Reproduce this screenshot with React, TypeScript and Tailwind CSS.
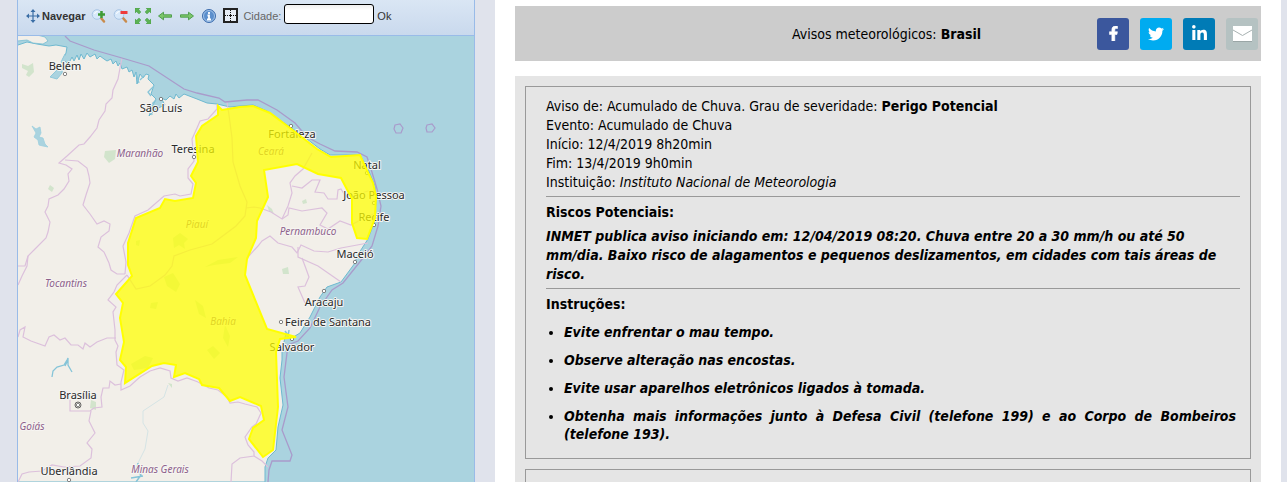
import React, { useState } from "react";
import { FaFacebookF, FaLinkedinIn, FaTwitter } from "react-icons/fa";

const cities = [
  { name: "Belém", x: 65, y: 70, dot: [65, 74] },
  { name: "São Luís", x: 161, y: 112, dot: [161, 99] },
  { name: "Teresina", x: 193, y: 153, dot: [194, 157] },
  { name: "Fortaleza", x: 292, y: 138, dot: [291, 126] },
  { name: "Natal", x: 367, y: 169, dot: [367, 173] },
  { name: "João Pessoa", x: 374, y: 199, dot: [374, 203] },
  { name: "Recife", x: 374, y: 221, dot: [374, 225] },
  { name: "Maceió", x: 355, y: 258, dot: [355, 262] },
  { name: "Aracaju", x: 324, y: 306, dot: [324, 291] },
  { name: "Feira de Santana", x: 328, y: 326, dot: [281, 322] },
  { name: "Salvador", x: 292, y: 351, dot: [292, 339] },
  { name: "Brasília", x: 78, y: 399, dot: [78, 405] },
  { name: "Uberlândia", x: 69, y: 475, dot: [69, 480] },
];

const states = [
  { name: "Maranhão", x: 140, y: 157 },
  { name: "Piauí", x: 197, y: 228 },
  { name: "Ceará", x: 271, y: 155 },
  { name: "Pernambuco", x: 308, y: 235 },
  { name: "Tocantins", x: 66, y: 287 },
  { name: "Bahia", x: 223, y: 325 },
  { name: "Goiás", x: 32, y: 430 },
  { name: "Minas Gerais", x: 160, y: 473 },
];

const borders = [
  "122,58 120,68 118,79 113,90 112,98 106,104 105,111 99,120 97,128 90,137 84,144 79,145 67,156 59,163 66,165 72,169 68,174 69,181 64,189 58,195 49,199 48,206 45,212 50,222 48,232 46,238 36,248 28,256 27,266 22,276 18,285",
  "65,160 78,161 87,168 89,176 90,183 86,195 83,205 90,214 97,224 104,221 110,224 109,231 101,237 98,247 104,252 109,263 111,270 117,274 125,274",
  "125,274 126,262 123,246 129,233 135,216 148,210 164,196 175,194 180,196 191,194 193,184 188,178 188,169 194,161 192,139 197,128 200,121 208,119 217,109 217,104",
  "127,275 117,285 114,292 108,300 116,307 113,312 115,330 115,340 118,346 116,352 117,365 124,370 121,382 121,390 130,386 140,377 150,371 160,368 170,371 171,378 178,381 187,378 198,382 209,388 218,390 227,397 230,403 238,402 245,404 257,407 261,413 256,424 252,427 245,437 248,445 254,452 254,456 240,458 232,464 231,482",
  "254,456 262,461 268,467",
  "18,337 20,330 25,327 23,337 31,341 45,346 49,337 54,335 60,340 65,338 71,345 78,345 83,349 85,343 90,347 97,342 107,338 116,338",
  "70,400 70,411 90,411 94,408 102,407 101,397 103,388 109,388 110,381 115,385 121,384",
  "91,411 89,421 95,433 87,443 92,449 91,458 80,466 64,467 52,465 42,471 29,472 22,474 18,482",
  "18,266 25,266 28,256",
  "312,153 303,169 295,176 290,183 292,193 288,206 282,219 271,212 260,208",
  "292,186 302,188 312,180 320,180 315,192 324,193 328,199 337,199 338,190 341,189 344,194 352,196 368,191 375,190",
  "282,219 288,215 289,208 302,211 322,208 327,213 320,225 328,229 340,221 351,225 364,218 374,214",
  "247,258 258,246 262,241 270,236 278,243 292,247 297,253 301,245 314,251 328,252 341,248 368,243",
  "298,247 298,257 318,266 341,282",
  "302,258 305,266 309,277 305,286 298,287 305,303",
  "227,102 229,115 232,138 233,162 240,186 247,202 245,216 236,226 220,238 212,244 190,250 174,256 172,266 165,275 150,286 136,289 127,275",
  "246,208 254,207 260,208",
];

const greens = [
  "22,64 28,66 33,63 34,72 29,77 26,75 28,71 22,68",
  "105,151 116,150 115,159 109,163 104,157",
  "91,400 96,402 96,410 90,408",
  "173,238 180,233 188,239 184,243 185,249 179,245 174,248",
  "131,364 145,356 153,358 148,368 134,370",
  "205,267 218,260 238,257 230,263 214,265",
  "164,277 173,273 180,284 176,292 167,286",
  "195,300 203,306 206,318 199,314",
  "225,325 230,336 228,347 223,338",
  "207,350 213,346 220,353 214,359",
  "151,303 158,302 156,309 150,308",
  "136,241 140,240 139,246 136,245",
  "282,269 288,267 289,274 283,274",
  "302,201 306,199 307,203 303,204",
  "267,205 272,209 274,214 269,211",
  "50,185 54,188 52,192 48,189",
  "168,383 172,384 172,388",
];

const coast =
  "18,45 27,42 37,44 49,46 56,45 67,47 66,53 63,59 67,63 66,66 70,61 72,57 74,61 77,55 79,60 81,54 84,59 87,53 90,57 95,54 97,59 100,56 104,59 107,61 111,59 113,64 116,61 118,66 120,63 122,69 127,67 129,72 132,70 134,77 136,72 137,84 140,74 143,78 146,74 149,75 148,79 154,85 151,94 156,99 153,105 149,116 156,109 165,105 161,98 166,100 170,96 174,99 176,94 179,98 184,94 197,99 207,103 217,104 230,107 240,106 253,105 267,111 290,127 307,139 320,149 330,155 360,155 368,169 375,186 376,203 374,223 368,239 357,256 355,263 341,282 327,287 320,297 310,317 300,333 290,339 286,333 284,342 282,349 282,360 280,378 283,405 278,427 276,450 268,458 265,467 265,482";

const sea =
  "65,36 70,41 94,50 122,58 149,66 184,89 197,93 219,98 225,102 247,100 258,100 277,110 295,123 307,137 320,144 335,151 357,152 367,157 371,169 377,189 381,206 378,226 372,246 363,258 343,283 332,290 320,307 310,328 298,341 288,345 284,377 288,407 282,430 292,455 290,461 272,461 269,470 268,482";

const warningArea =
  "218,106 222,110 240,107 253,106 270,113 290,128 317,149 331,157 360,155 364,164 373,183 376,196 375,218 367,239 357,238 352,223 352,199 341,178 318,174 297,164 264,170 268,197 257,221 256,238 247,259 245,275 267,329 296,337 280,339 276,352 278,407 273,450 263,457 249,439 253,428 264,420 261,406 240,397 230,401 219,388 202,385 199,379 185,373 174,377 176,365 164,363 152,366 125,383 126,367 120,360 124,342 120,318 123,303 116,294 132,276 128,265 128,243 136,218 160,208 165,199 175,201 193,198 196,183 191,176 198,162 196,136 202,126 218,115";

const WarningMap = () => (
  <svg viewBox="18 36 456 446" className="block w-full bg-[#aad3df]" role="img" aria-label="Mapa de avisos">
    <polygon points={`${coast} 0,482 0,45`} fill="#f2efe9" stroke="#6fb9d0" strokeWidth="1" />
    <path d="M17 35h20l8 2 3 4-5 3-10-1-6-3-10 1z" fill="#f2efe9" stroke="#6fb9d0" strokeWidth=".7" />
    {/* rivers and reservoirs */}
    <path d="M65 54l-4 8 4 3M63 65l-6 5-7 7 7 2 5-6z" fill="#aad3df" stroke="#8fc8da" strokeWidth="1" />
    <path d="M32 126l4 3 4-2 1 6-2 4 4 1 2 6 3 3-5-1-4-1-1-5-4-3 2-4z" fill="#aad3df" stroke="#9dcfde" strokeWidth=".8" />
    <path d="M136 73l3 10M144 76l-4 4M154 86l-6 6 3 4M156 100l-6 6 2 9M52 377l1-6 4-4 7-2 3-5 1-2 0 7 4 7M68 360l-3 6" fill="none" stroke="#86c4d8" strokeWidth="1.3" />
    <path d="M168 385l-4 12-21 14 0 12 5 8-3 18-7 14-3 10" fill="none" stroke="#d5e4e5" strokeWidth="1" />
    <path d="M138 463l-1 7 4 5-5 7M131 478l12-2M285 331l3 4M289 330l-1 7" fill="none" stroke="#86c4d8" strokeWidth="1.5" />
    {greens.map((points) => (
      <polygon key={points} points={points} fill="#d2e4cc" />
    ))}
    {borders.map((points) => (
      <polyline key={points} points={points} fill="none" stroke="#dcc0dc" strokeWidth="1.2" />
    ))}
    <polyline points={sea} fill="none" stroke="#a99bcb" strokeWidth="1.3" />
    <path d="M395 125l5-1 3 4-2 5-5 0-2-4zM427 125l5-1 3 4-3 4-5 0-1-4z" fill="none" stroke="#a99bcb" strokeWidth="1.2" />
    {cities.map((c) => (
      <circle key={c.name} cx={c.dot[0]} cy={c.dot[1]} r="1.7" fill="#fff" stroke="#666" strokeWidth=".8" />
    ))}
    <circle cx="78" cy="405" r="3" fill="none" stroke="#444" strokeWidth=".8" />
    <g className="font-['Noto_Sans',sans-serif]" textAnchor="middle" paintOrder="stroke" strokeLinejoin="round">
      {states.map((s) => (
        <text key={s.name} x={s.x} y={s.y} fill="#8d618b" stroke="#f7f5f2" strokeWidth="2" className="text-[10px] italic">
          {s.name}
        </text>
      ))}
      {cities.map((c) => (
        <text key={c.name} x={c.x} y={c.y} fill="#2a2a2a" stroke="#f5f5f3" strokeWidth="2" className="text-[11px]">
          {c.name}
        </text>
      ))}
    </g>
    <polygon points={warningArea} fill="#ff0" fillOpacity=".73" stroke="#ff0" strokeWidth="2" />
  </svg>
);

const MoveIcon = () => (
  <svg viewBox="0 0 16 16" className="size-4">
    <path d="M8 3v10M3 8h10" stroke="#3a6ea5" strokeWidth="1.2" />
    <path d="M8 1l2.500 3h-5zM8 15l2.500-3h-5zM1 8l3-2.500v5zM15 8l-3-2.500v5z" fill="#3a6ea5" />
  </svg>
);

const ZoomIcon = ({ out = false }) => (
  <svg viewBox="0 0 16 16" className="size-4">
    <path d="M10 10l3 3.500" stroke="#c98b4c" strokeWidth="2.500" strokeLinecap="round" />
    <circle cx="6" cy="6.500" r="4.800" fill="#d6e8fa" stroke="#a9c5e4" />
    <path d="M3.500 6a3 3 0 0 1 3-2.500" stroke="#fff" fill="none" />
    {out ? (
      <path d="M7.500 4.500h7" stroke="#ee3b3b" strokeWidth="3" />
    ) : (
      <path d="M10.500 3v7M7 6.500h7" stroke="#3f9b35" strokeWidth="2.500" />
    )}
  </svg>
);

const ExtentIcon = () => (
  <svg viewBox="0 0 16 16" className="size-4" fill="#5cb254" stroke="#3f9440" strokeWidth=".4">
    <path d="M0 0h5L3.700 1.500 6 4 4 6 1.500 3.700 0 5zM16 0v5l-1.500-1.300L12 6l-2-2 2.300-2.500L11 0zM0 16v-5l1.500 1.300L4 10l2 2-2.300 2.500L5 16zM16 16h-5l1.300-1.500L10 12l2-2 2.500 2.300L16 11z" />
  </svg>
);

const ArrowIcon = ({ right = false }) => (
  <svg viewBox="0 0 16 16" className="size-4" fill="#7cc66b" stroke="#479a45" strokeWidth=".9">
    {right ? (
      <path d="M1.500 6.800h8V4.200L14.500 8l-5 3.800V9.200h-8z" />
    ) : (
      <path d="M14.500 6.800h-8V4.200L1.500 8l5 3.800V9.200h8z" />
    )}
  </svg>
);

const InfoIcon = () => (
  <svg viewBox="0 0 16 16" className="size-4">
    <circle cx="8" cy="8" r="6.500" fill="#5b8fcd" stroke="#3f6ead" />
    <circle cx="8" cy="8" r="5.500" fill="none" stroke="#b4cfee" strokeWidth=".8" />
    <path d="M8 4v2M6.500 7.500H8v4M6 11.500h4" stroke="#fff" strokeWidth="1.800" fill="none" />
  </svg>
);

const GridIcon = () => (
  <svg viewBox="0 0 16 16" className="size-4">
    <rect x="1" y="1" width="13" height="13" fill="#e6edf6" stroke="#222" strokeWidth="2" />
    <path d="M7.500 2v11M2 7.500h11" stroke="#111" strokeDasharray="1 1" />
    <path d="M6 7.500h3M7.500 6v3" stroke="#111" />
  </svg>
);

const tools = [
  { label: "Aproximar", icon: <ZoomIcon /> },
  { label: "Afastar", icon: <ZoomIcon out /> },
  { label: "Extensão total", icon: <ExtentIcon /> },
  { label: "Anterior", icon: <ArrowIcon /> },
  { label: "Próximo", icon: <ArrowIcon right /> },
  { label: "Informações", icon: <InfoIcon /> },
  { label: "Grade", icon: <GridIcon /> },
];

const Toolbar = () => {
  const [city, setCity] = useState("");

  return (
    <div className="flex h-9 items-center border-b border-[#99bbe8] bg-linear-to-b from-[#dae6f4] to-[#c9d9ed] pb-[3px] pl-[7px] font-['Liberation_Sans',sans-serif] text-[11px] text-[#333]">
      <button className="flex items-center gap-px font-bold">
        <MoveIcon />
        Navegar
      </button>
      {tools.map((t) => (
        <button key={t.label} className="ml-1.5 shrink-0" aria-label={t.label}>
          {t.icon}
        </button>
      ))}
      <label htmlFor="cidade" className="ml-1 text-[#666]">
        Cidade:
      </label>
      <input
        id="cidade"
        value={city}
        onChange={(e) => setCity(e.target.value)}
        className="mx-[3px] mt-1 h-5 w-[90px] self-start rounded-[3px] border border-black bg-linear-to-b from-[#eee] to-white to-30% px-1"
      />
      <button>Ok</button>
    </div>
  );
};

const MailIcon = () => (
  <svg viewBox="0 0 32 32" className="size-8">
    <path d="M7 8h19v16H7z" fill="#9aa6a6" />
    <path d="M7 8h19v15H7z" fill="#fff" />
    <path d="M7 12l9.500 5.500L26 12" fill="none" stroke="#a8b2b2" strokeWidth="1" />
  </svg>
);

const ShareLinks = () => (
  <div className="flex gap-[11px] justify-self-end text-white">
    <a href="#facebook" aria-label="Facebook" className="flex size-8 items-center justify-center rounded-[3px] bg-[#3b579d]">
      <FaFacebookF size={15} stroke="white" strokeWidth={20} />
    </a>
    <a href="#twitter" aria-label="Twitter" className="flex size-8 items-center justify-center rounded-[3px] bg-[#00abf0]">
      <FaTwitter size={16} />
    </a>
    <a href="#linkedin" aria-label="LinkedIn" className="flex size-8 items-center justify-center rounded-[3px] bg-[#007bb6]">
      <FaLinkedinIn size={17} />
    </a>
    <a href="#email" aria-label="E-mail" className="size-8 rounded-[3px] bg-[#b5c2c2]">
      <MailIcon />
    </a>
  </div>
);

const instructions = [
  "Evite enfrentar o mau tempo.",
  "Observe alteração nas encostas.",
  "Evite usar aparelhos eletrônicos ligados à tomada.",
  "Obtenha mais informações junto à Defesa Civil (telefone 199) e ao Corpo de Bombeiros (telefone 193).",
];

const Warning = () => (
  <article className="border border-[#999] pt-2.5 pr-2.5 pb-[15px] pl-5">
    <p>
      Aviso de: Acumulado de Chuva. Grau de severidade: <b>Perigo Potencial</b>
    </p>
    <p>Evento: Acumulado de Chuva</p>
    <p>Início: 12/4/2019 8h20min</p>
    <p>Fim: 13/4/2019 9h0min</p>
    <p>
      Instituição: <i>Instituto Nacional de Meteorologia</i>
    </p>
    <hr className="mt-1 mb-1.5 border-[#999]" />
    <h2 className="font-bold">Riscos Potenciais:</h2>
    <p className="mt-[5px] font-bold italic">
      INMET publica aviso iniciando em: 12/04/2019 08:20. Chuva entre 20 a 30 mm/h ou até 50 mm/dia. Baixo risco de
      alagamentos e pequenos deslizamentos, em cidades com tais áreas de risco.
    </p>
    <hr className="mt-1 mb-1.5 border-[#999]" />
    <h2 className="font-bold">Instruções:</h2>
    <ul className="mt-[9px] flex list-disc flex-col gap-2.5 pr-1 pl-[18px] text-justify leading-[18px] font-bold italic">
      {instructions.map((text) => (
        <li key={text}>{text}</li>
      ))}
    </ul>
  </article>
);

export default function App() {
  return (
    <div className="grid h-screen grid-cols-[5fr_8fr] overflow-hidden bg-white">
      <div className="bg-[#e0e3ec] pr-5 pl-[17px]">
        <div className="border-x border-[#99bbe8]">
          <Toolbar />
          <WarningMap />
        </div>
      </div>
      <div className="flex flex-col border-r-6 border-[#e0e3ec] px-5 pt-1.5 font-['DejaVu_Sans_Condensed','DejaVu_Sans',sans-serif] text-[14px] leading-[19px] text-black">
        <header className="grid h-[55px] shrink-0 grid-cols-[1fr_auto_1fr] items-center bg-[#ccc] pr-[3px]">
          <h1 className="col-start-2 pt-px">
            Avisos meteorológicos: <b>Brasil</b>
          </h1>
          <ShareLinks />
        </header>
        <main className="mt-[15px] flex flex-1 flex-col gap-2.5 bg-[#e5e5e5] px-2.5 pt-2.5">
          <Warning />
          <article className="flex-1 border border-b-0 border-[#999]" />
        </main>
      </div>
    </div>
  );
}
